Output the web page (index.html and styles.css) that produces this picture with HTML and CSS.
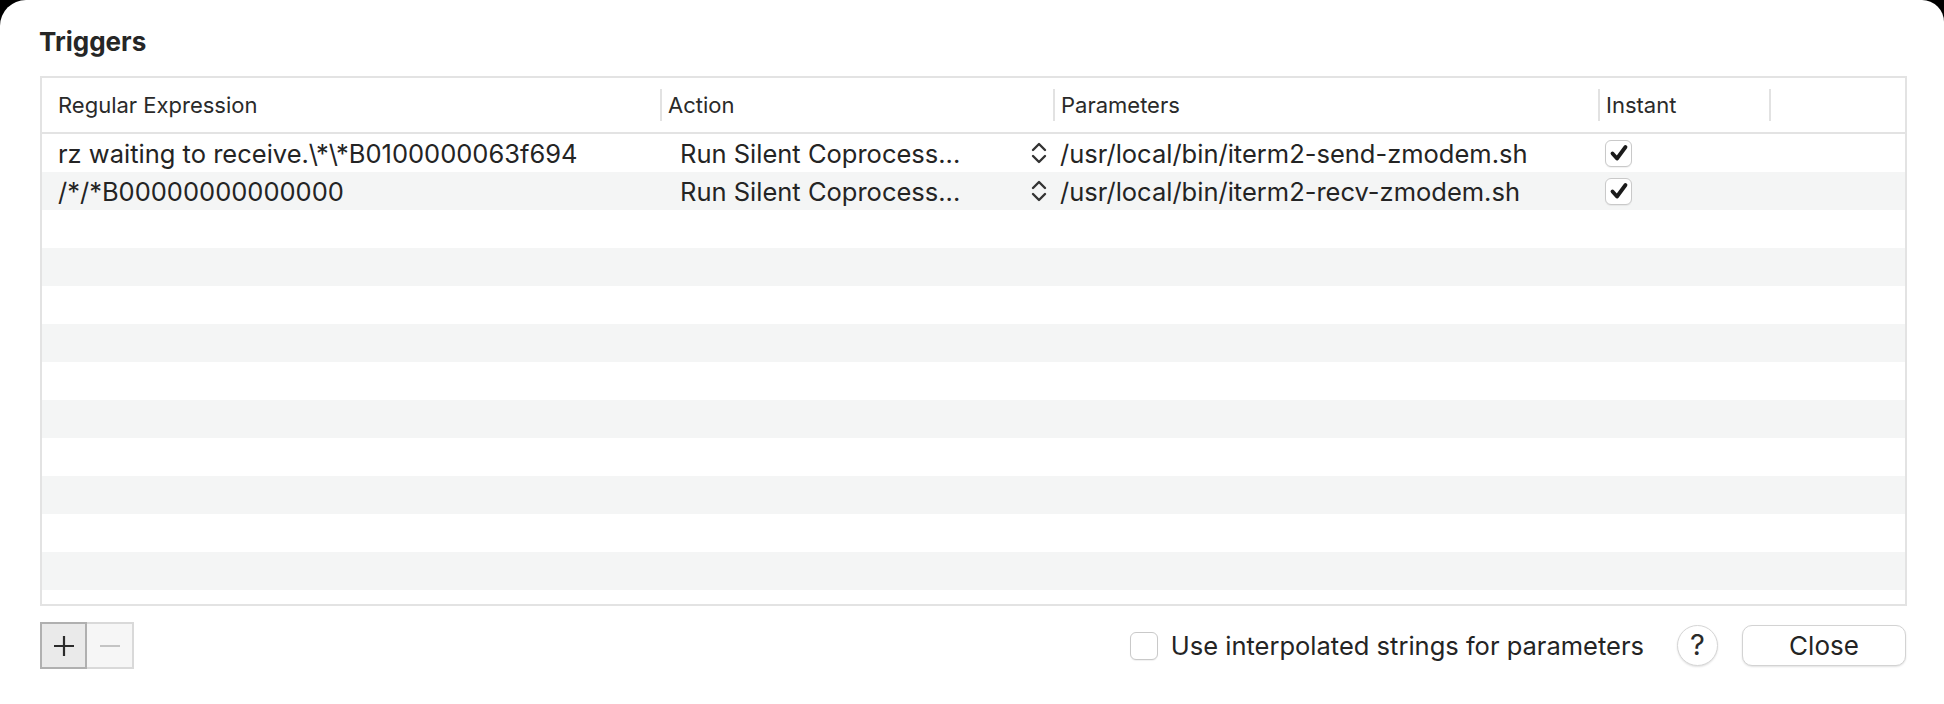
FILE: index.html
```html
<!DOCTYPE html>
<html>
<head>
<meta charset="utf-8">
<link rel="stylesheet" href="styles.css">
</head>
<body>
<div class="window">
  <h1 class="title">Triggers</h1>
  <div class="table">
    <div class="thead">
      <div class="th c1"><span>Regular Expression</span></div>
      <div class="th c2 sep"><span>Action</span></div>
      <div class="th c3 sep"><span>Parameters</span></div>
      <div class="th c4 sep"><span>Instant</span></div>
      <div class="th c5 sep"></div>
    </div>
    <div class="tbody">
      <div class="row">
        <div class="td c1">rz waiting to receive.\*\*B0100000063f694</div>
        <div class="td c2 action"><span class="atext">Run Silent Coprocess...</span>
          <svg class="stepper" width="16" height="22" viewBox="0 0 16 22"><path d="M2 8 L8 2 L14 8 M2 14 L8 20 L14 14" fill="none" stroke="#333" stroke-width="2.4" stroke-linecap="round" stroke-linejoin="round"/></svg>
        </div>
        <div class="td c3">/usr/local/bin/iterm2-send-zmodem.sh</div>
        <div class="td c4"><span class="cb checked"><svg width="20" height="18" viewBox="0 0 20 18"><path d="M3.5 9.5 L8 14.5 L16.5 3" fill="none" stroke="#1a1a1a" stroke-width="3.8" stroke-linecap="round" stroke-linejoin="round"/></svg></span></div>
        <div class="td c5"></div>
      </div>
      <div class="row">
        <div class="td c1">/*/*B00000000000000</div>
        <div class="td c2 action"><span class="atext">Run Silent Coprocess...</span>
          <svg class="stepper" width="16" height="22" viewBox="0 0 16 22"><path d="M2 8 L8 2 L14 8 M2 14 L8 20 L14 14" fill="none" stroke="#333" stroke-width="2.4" stroke-linecap="round" stroke-linejoin="round"/></svg>
        </div>
        <div class="td c3">/usr/local/bin/iterm2-recv-zmodem.sh</div>
        <div class="td c4"><span class="cb checked"><svg width="20" height="18" viewBox="0 0 20 18"><path d="M3.5 9.5 L8 14.5 L16.5 3" fill="none" stroke="#1a1a1a" stroke-width="3.8" stroke-linecap="round" stroke-linejoin="round"/></svg></span></div>
        <div class="td c5"></div>
      </div>
      <div class="row"></div>
      <div class="row"></div>
      <div class="row"></div>
      <div class="row"></div>
      <div class="row"></div>
      <div class="row"></div>
      <div class="row"></div>
      <div class="row"></div>
      <div class="row"></div>
      <div class="row"></div>
      <div class="row"></div>
    </div>
  </div>
  <div class="footer">
    <div class="seg">
      <button class="segbtn plus"><svg width="22" height="22" viewBox="0 0 22 22"><path d="M11 1 V21 M1 11 H21" stroke="#2b2b2b" stroke-width="2.2"/></svg></button>
      <button class="segbtn minus"><svg width="22" height="22" viewBox="0 0 22 22"><path d="M1 11 H21" stroke="#c4c4c4" stroke-width="2"/></svg></button>
    </div>
    <div class="actions">
      <label class="opt"><span class="cb"></span><span>Use interpolated strings for parameters</span></label>
      <button class="help">?</button>
      <button class="close">Close</button>
    </div>
  </div>
</div>
</body>
</html>
```

FILE: styles.css
```css
html, body {
  margin: 0;
  padding: 0;
  background: #000;
}
body {
  width: 1944px;
  height: 704px;
  overflow: hidden;
  font-family: Inter, "Noto Sans", sans-serif;
  color: #252525;
}
.window {
  width: 1944px;
  height: 704px;
  background: #fff;
  border-radius: 26px 22px 0 0;
  box-sizing: border-box;
  padding: 0 37px 0 40px;
  display: flex;
  flex-direction: column;
}
.title {
  flex: none;
  margin: 0 0 0 -1px;
  padding: 25px 0 0 0;
  height: 76px;
  box-sizing: border-box;
  font-size: 26px;
  line-height: 34px;
  font-weight: 700;
  color: #262626;
}
.table {
  flex: none;
  border: 2px solid #e3e3e3;
  height: 530px;
  box-sizing: border-box;
  display: flex;
  flex-direction: column;
  overflow: hidden;
}
.thead {
  display: flex;
  height: 56px;
  flex: none;
  box-sizing: border-box;
  border-bottom: 2px solid #e3e3e3;
}
.c1 { width: 618px; flex: none; }
.c2 { width: 393px; flex: none; }
.c3 { width: 545px; flex: none; }
.c4 { width: 171px; flex: none; }
.c5 { flex: 1; }
.th {
  display: flex;
  align-items: center;
  font-size: 22px;
  color: #2a2a2a;
  box-sizing: border-box;
}
.th.c1 { padding-left: 16px; }
.th.sep::before {
  content: "";
  width: 2px;
  height: 32px;
  background: #e2e2e2;
  margin-right: 6px;
  flex: none;
}
.tbody {
  flex: 1;
  overflow: hidden;
}
.row {
  height: 38px;
  display: flex;
  align-items: center;
}
.row:nth-child(even) {
  background: #f4f5f5;
}
.td {
  box-sizing: border-box;
  font-size: 25.5px;
  color: #242424;
  white-space: nowrap;
  display: flex;
  align-items: center;
  height: 38px;
}
.td.c1 { padding-left: 16px; }
.td.c2 { padding-left: 20px; padding-right: 6px; justify-content: space-between; }
.td.c3 { padding-left: 7px; }
.td.c4 { padding-left: 7px; }
.stepper { flex: none; }
.cb {
  width: 27px;
  height: 27px;
  box-sizing: border-box;
  border: 1px solid #c9c9c9;
  border-radius: 6px;
  background: #fff;
  display: inline-flex;
  align-items: center;
  justify-content: center;
  box-shadow: 0 1px 1px rgba(0,0,0,0.06);
  flex: none;
}
.footer {
  flex: none;
  display: flex;
  align-items: center;
  justify-content: space-between;
  margin-top: 16px;
  height: 47px;
}
.seg {
  display: flex;
}
.segbtn {
  width: 47px;
  height: 47px;
  margin: 0;
  padding: 0;
  display: flex;
  align-items: center;
  justify-content: center;
  box-sizing: border-box;
}
.plus {
  background: #eaeaea;
  border: 2px solid #b0b0b0;
}
.minus {
  background: #f6f6f6;
  border: 2px solid #d9d9d9;
  border-left: none;
}
.actions {
  display: flex;
  align-items: center;
  margin-right: 1px;
}
.opt {
  display: flex;
  align-items: center;
  font-size: 25.5px;
  color: #242424;
}
.opt .cb {
  width: 28px;
  height: 28px;
  margin-right: 13px;
}
.help {
  width: 41px;
  height: 41px;
  border-radius: 50%;
  border: 1px solid #d6d6d6;
  background: #fff;
  box-shadow: 0 1px 2px rgba(0,0,0,0.12);
  font-family: Inter, sans-serif;
  font-size: 29px;
  color: #2a2a2a;
  padding: 0 0 2px 0;
  margin-left: 33px;
  display: flex;
  align-items: center;
  justify-content: center;
}
.close {
  width: 164px;
  height: 41px;
  border-radius: 10px;
  border: 1px solid #d3d3d3;
  background: #fff;
  box-shadow: 0 1px 2px rgba(0,0,0,0.12);
  font-family: Inter, sans-serif;
  font-size: 26px;
  color: #242424;
  margin-left: 24px;
  padding: 0;
}
```
